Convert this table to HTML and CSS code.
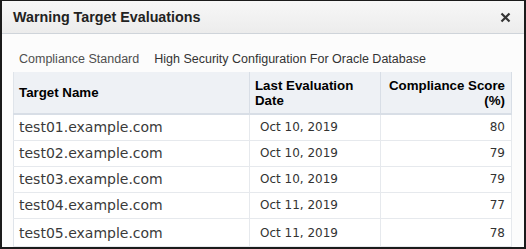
FILE: index.html
```html
<!DOCTYPE html>
<html lang="en">
<head>
  <meta charset="UTF-8">
  <title>Warning Target Evaluations</title>
  <link rel="stylesheet" href="styles.css">
</head>
<body>
  <div class="dialog">
    <!-- Title bar -->
    <header class="dialog-header">
      <h1>Warning Target Evaluations</h1>
      <span class="close" title="Close">
        <svg width="11" height="11" viewBox="0 0 11 11"><path d="M1.5 1.5 L9.5 9.5 M9.5 1.5 L1.5 9.5" stroke="#333" stroke-width="2.2"/></svg>
      </span>
    </header>

    <div class="dialog-body">
      <div class="standard">
        <span class="label">Compliance Standard</span>
        <span class="value">High Security Configuration For Oracle Database</span>
      </div>

      <table class="targets">
        <thead>
          <tr>
            <th class="col-name">Target Name</th>
            <th class="col-date">Last Evaluation Date</th>
            <th class="col-score">Compliance Score (%)</th>
          </tr>
        </thead>
        <tbody>
          <tr><td class="name">test01.example.com</td><td class="date">Oct 10, 2019</td><td class="score">80</td></tr>
          <tr><td class="name">test02.example.com</td><td class="date">Oct 10, 2019</td><td class="score">79</td></tr>
          <tr><td class="name">test03.example.com</td><td class="date">Oct 10, 2019</td><td class="score">79</td></tr>
          <tr><td class="name">test04.example.com</td><td class="date">Oct 11, 2019</td><td class="score">77</td></tr>
          <tr class="last"><td class="name">test05.example.com</td><td class="date">Oct 11, 2019</td><td class="score">78</td></tr>
        </tbody>
      </table>
    </div>
  </div>
</body>
</html>
```

FILE: styles.css
```css
* {
  margin: 0;
  padding: 0;
  box-sizing: border-box;
}

body {
  font-family: "Liberation Sans", Arial, sans-serif;
  background: #fff;
  color: #333;
}

/* Dialog frame */
.dialog {
  width: 526px;
  height: 249px;
  border: 2px solid #1b1b1b;
  border-top-width: 1px;
  background: #fcfcfc;
  overflow: hidden;
}

/* Title bar */
.dialog-header {
  height: 33px;
  display: flex;
  align-items: center;
  justify-content: space-between;
  padding: 0 13px 0 11px;
  background: linear-gradient(#f7f7f7, #ececec);
  border-bottom: 1px solid #cfd4da;
}

.dialog-header h1 {
  font-size: 14.3px;
  font-weight: bold;
  color: #222;
}

.close {
  display: flex;
  padding-top: 1px;
}

/* Body */
.dialog-body {
  padding: 18px 12px 0 11px;
}

.standard {
  font-size: 12.5px;
  display: flex;
  gap: 15px;
  padding-left: 6px;
  height: 20px;
  line-height: 14px;
}

.standard .label {
  color: #4f4f4f;
}

.standard .value {
  color: #333;
}

/* Table */
.targets {
  width: 499px;
  border-collapse: collapse;
  background: #fff;
  border-left: 1px solid #dfe4ea;
  border-right: 1px solid #dfe4ea;
}

.targets th {
  height: 42px;
  background: #eef1f5;
  font-size: 13.3px;
  font-weight: bold;
  color: #000;
  text-align: left;
  vertical-align: middle;
  line-height: 15px;
  padding: 0 5px;
  border-right: 1px solid #d8dee6;
  border-bottom: 2px solid #d8dee6;
}

.targets th.col-name {
  width: 236px;
}

.targets th.col-date {
  width: 131px;
}

.targets th.col-score {
  text-align: right;
  padding-right: 6px;
}

.targets td {
  height: 26px;
  border-right: 1px solid #e6e9ed;
  border-bottom: 1px solid #e6e9ed;
  font-family: "DejaVu Sans", Verdana, sans-serif;
  color: #333;
  vertical-align: middle;
  padding: 0 6px;
}

.targets tr.last td {
  height: 28px;
  padding-top: 2px;
}

.targets td.name {
  font-size: 14px;
  padding-left: 5px;
  color: #3a3a3a;
}

.targets td.date {
  font-size: 12px;
  padding-left: 10px;
}

.targets td.score {
  font-size: 12px;
  text-align: right;
}
```
